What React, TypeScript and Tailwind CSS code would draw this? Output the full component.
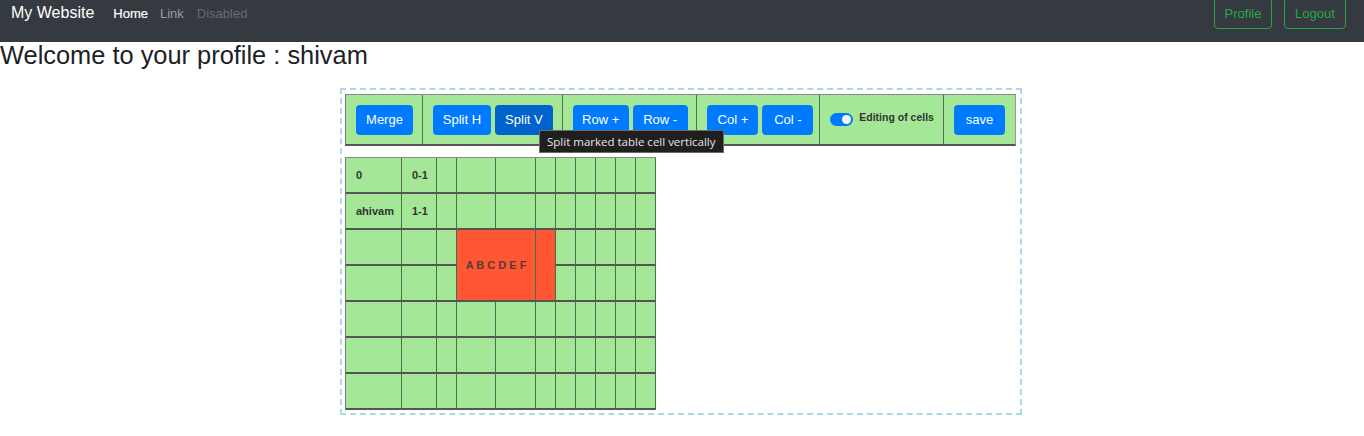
import React from "react";

const COLS = 11;
const ROWS = 7;

type Cell = { key: string; text?: string; red?: boolean; span?: string; big?: boolean };

function buildCells(): Cell[] {
  const cells: Cell[] = [];
  const texts: Record<string, string> = { "0-0": "0", "0-1": "0-1", "1-0": "ahivam", "1-1": "1-1" };
  for (let r = 0; r < ROWS; r++) {
    for (let c = 0; c < COLS; c++) {
      if (r === 2 && c === 3) {
        cells.push({ key: `${r}-${c}`, red: true, span: "col-span-2 row-span-2", big: true, text: "A B C D E F" });
        continue;
      }
      if (r === 2 && c === 4) continue;
      if (r === 2 && c === 5) {
        cells.push({ key: `${r}-${c}`, red: true, span: "row-span-2" });
        continue;
      }
      if (r === 3 && (c === 3 || c === 4 || c === 5)) continue;
      cells.push({ key: `${r}-${c}`, text: texts[`${r}-${c}`] });
    }
  }
  return cells;
}

function Btn({ label, w, active }: { label: string; w: string; active?: boolean }) {
  return (
    <button
      className={`${w} h-[30px] rounded-[4px] text-white text-[13px] leading-none flex items-center justify-center ${
        active ? "bg-[#0062cc]" : "bg-[#007bff]"
      }`}
    >
      {label}
    </button>
  );
}

export default function App() {
  const cells = buildCells();
  return (
    <div className="relative w-[1364px] h-[436px] bg-white overflow-hidden" style={{ fontFamily: '"Liberation Sans", Arial, sans-serif' }}>
      <nav className="h-[42px] bg-[#343a40] flex justify-between">
        <div className="flex items-baseline pl-[11px] pt-[1px]">
          <span className="text-white text-[16px] leading-[24px]">My Website</span>
          <span className="ml-[19px] text-white text-[13px] leading-[24px] [-webkit-text-stroke:0.2px_white]">Home</span>
          <span className="ml-[12px] text-[#9a9da0] text-[13px] leading-[24px]">Link</span>
          <span className="ml-[13px] text-[#676a6e] text-[13px] leading-[24px]">Disabled</span>
        </div>
        <div className="flex gap-[12px] mr-[18px] -mt-[2px]">
          <button className="w-[58px] h-[31px] border border-[#28a745] rounded-[4px] text-[#28a745] text-[13px] leading-none">Profile</button>
          <button className="w-[62px] h-[31px] border border-[#28a745] rounded-[4px] text-[#28a745] text-[13px] leading-none">Logout</button>
        </div>
      </nav>

      <h1 className="text-[25.4px] leading-[26px] text-[#1d2125]">Welcome to your profile : shivam</h1>

      <div className="ml-[340px] mt-[20px] w-[682px] border-2 border-dashed border-[#add8e6] pl-[3px] pt-[4px] pb-[3px]">
        <div className="w-[671px] h-[52px] flex bg-[#a3e797] border-l border-r border-t border-l-[#777] border-r-[#999] border-t-[#888] border-b-2 border-b-[#555]">
          <div className="w-[77px] border-r border-[#4f6f4f] flex items-center pl-[10px]">
            <Btn label="Merge" w="w-[57px]" />
          </div>
          <div className="w-[140px] border-r border-[#4f6f4f] flex items-center pl-[10px] gap-[4px]">
            <Btn label="Split H" w="w-[58px]" />
            <Btn label="Split V" w="w-[58px]" active />
          </div>
          <div className="w-[135px] border-r border-[#4f6f4f] flex items-center pl-[10px] gap-[4px]">
            <Btn label="Row +" w="w-[56px]" />
            <Btn label="Row -" w="w-[55px]" />
          </div>
          <div className="w-[123px] border-r border-[#4f6f4f] flex items-center pl-[10px] gap-[4px]">
            <Btn label="Col +" w="w-[51px]" />
            <Btn label="Col -" w="w-[51px]" />
          </div>
          <div className="w-[124px] border-r border-[#4f6f4f] flex items-center pl-[10px]">
            <div className="w-[23px] h-[13px] rounded-full bg-[#007bff] flex items-center justify-end pr-[2px]">
              <div className="w-[9px] h-[9px] rounded-full bg-white" />
            </div>
            <span className="ml-[6px] mb-[4px] text-[10.5px] font-bold text-[#333]">Editing of cells</span>
          </div>
          <div className="w-[71px] flex items-center pl-[10px]">
            <Btn label="save" w="w-[51px]" />
          </div>
        </div>

        <div className="mt-[11px] w-[311px] border-l border-t border-l-[#777] border-t-[#888] grid grid-cols-[56px_35px_20px_39px_40px_repeat(6,20px)] auto-rows-[36px]">
          {cells.map((cell) => (
            <div
              key={cell.key}
              className={`${cell.span ?? ""} border-r border-r-[#4a6e4a] border-b-2 border-b-[#555] flex items-center ${
                cell.red ? "bg-[#ff5733]" : "bg-[#a3e797]"
              } ${cell.big ? "justify-center" : "pl-[10px]"}`}
            >
              {cell.text && (
                <span className={`text-[11px] font-bold ${cell.big ? "text-[#5a3b33]" : "text-[#333]"}`}>
                  {cell.text}
                </span>
              )}
            </div>
          ))}
        </div>
      </div>

      <div
        className="absolute left-[539px] top-[130px] h-[23px] px-[7px] flex items-center bg-[#1f1f1f] border border-[#6b6b6b] text-[#e6e6e6] text-[11.5px]"
        style={{ fontFamily: '"Open Sans", "Noto Sans", sans-serif' }}
      >
        Split marked table cell vertically
      </div>
    </div>
  );
}
